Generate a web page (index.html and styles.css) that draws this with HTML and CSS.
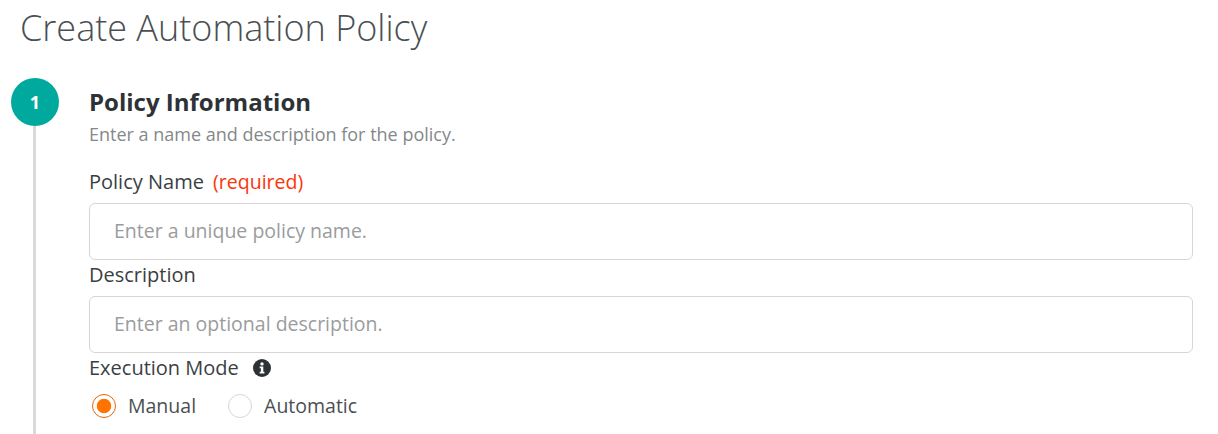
FILE: index.html
```html
<!DOCTYPE html>
<html lang="en">
<head>
    <meta charset="UTF-8">
    <title>Create Automation Policy</title>
    <link rel="stylesheet" href="styles.css">
</head>
<body>
    <h1 class="page-title">Create Automation Policy</h1>

    <!-- step 1 -->
    <div class="step">
        <div class="step-rail">
            <div class="step-number">1</div>
            <div class="step-line"></div>
        </div>
        <div class="step-body">
            <h2 class="step-title">Policy Information</h2>
            <p class="step-desc">Enter a name and description for the policy.</p>

            <label class="field-label first" for="policy-name">Policy Name <span class="required">(required)</span></label>
            <input class="text-input" id="policy-name" type="text" placeholder="Enter a unique policy name.">

            <label class="field-label" for="policy-desc">Description</label>
            <input class="text-input" id="policy-desc" type="text" placeholder="Enter an optional description.">

            <div class="field-label mode-label">
                Execution Mode
                <svg class="info-icon" viewBox="0 0 18 18" width="18" height="18">
                    <circle cx="9" cy="9" r="9" fill="#2d3236"/>
                    <circle cx="9" cy="4.9" r="1.7" fill="#fff"/>
                    <path d="M6.7 7.6h3.6v5.2h1.1v1.7H6.7v-1.7h1.2V9.3H6.7z" fill="#fff"/>
                </svg>
            </div>
            <div class="radio-row">
                <label class="radio-option"><input type="radio" name="mode" checked> Manual</label>
                <label class="radio-option"><input type="radio" name="mode"> Automatic</label>
            </div>
        </div>
    </div>
</body>
</html>
```

FILE: styles.css
```css
*{
    margin: 0;
    padding: 0;
    box-sizing: border-box;
}
body{
    font-family: "Open Sans", sans-serif;
    background: #fff;
    height: 434px;
    overflow: hidden;
    color: #3a3f43;
}
.page-title{
    font-size: 36px;
    font-weight: 300;
    line-height: 50px;
    padding: 3px 0 0 20px;
    color: #4a4f53;
}
.step{
    display: flex;
    margin-top: 25px;
    padding-left: 11px;
}
.step-rail{
    width: 48px;
    display: flex;
    flex-direction: column;
    align-items: center;
    height: 356px;
}
.step-number{
    width: 48px;
    height: 48px;
    flex: none;
    border-radius: 50%;
    background: #00a99d;
    color: #fff;
    font-size: 18px;
    font-weight: 700;
    display: flex;
    align-items: center;
    justify-content: center;
}
.step-line{
    width: 3px;
    flex: 1;
    background: #d9d9d9;
    margin-left: -1px;
}
.step-body{
    margin-left: 30px;
    width: 1104px;
}
.step-title{
    font-size: 24px;
    font-weight: 700;
    line-height: 30px;
    margin-top: 9px;
    color: #2d3236;
}
.step-desc{
    font-size: 18px;
    line-height: 24px;
    margin-top: 5px;
    color: #85888a;
}
.field-label{
    display: block;
    font-size: 20px;
    font-weight: 500;
    line-height: 26px;
    margin: 2px 0 8px;
}
.field-label.first{
    margin-top: 23px;
    margin-bottom: 8px;
}
.required{
    font-size: 19.5px;
    font-weight: 400;
    color: #f9360a;
    margin-left: 4px;
}
.text-input{
    display: block;
    width: 100%;
    height: 57px;
    border: 1px solid #d6d6d6;
    border-radius: 6px;
    padding: 0 24px 2px;
    font-family: inherit;
    font-size: 19.5px;
    color: #2d3236;
    outline: none;
}
.text-input::placeholder{
    color: #9a9c9d;
    opacity: 1;
}
.mode-label{
    display: flex;
    align-items: center;
    gap: 14px;
    margin-top: 2px;
    margin-bottom: 0;
}
.radio-row{
    display: flex;
    gap: 32px;
    margin-top: 13px;
    padding-left: 3px;
}
.radio-option{
    display: flex;
    align-items: center;
    gap: 12px;
    font-size: 19.5px;
    line-height: 24px;
    color: #4a4f53;
}
.radio-option input{
    appearance: none;
    width: 24px;
    height: 24px;
    border: 1px solid #d6d6d6;
    border-radius: 50%;
    background: #fff;
}
.radio-option input:checked{
    border-color: #e8650a;
    background: radial-gradient(circle, #ff7300 0 6.8px, #fff 7.6px);
}
```
